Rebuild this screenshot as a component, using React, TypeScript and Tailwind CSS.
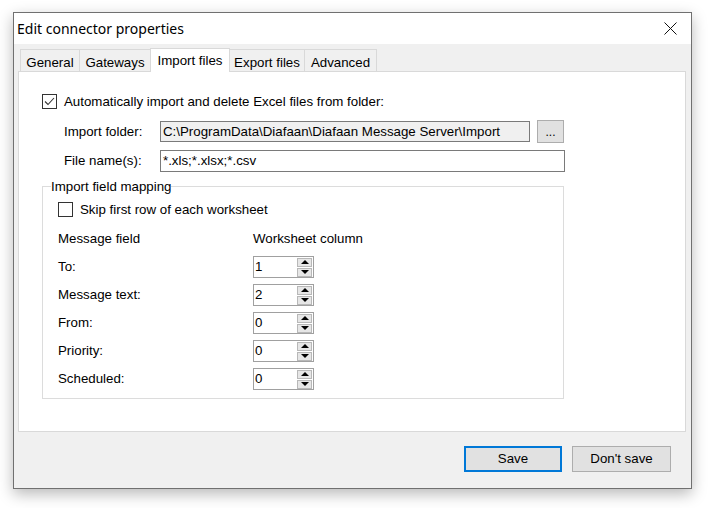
import React from "react";

const font = { fontFamily: '"Liberation Sans", Arial, sans-serif' };

function CheckBox({ checked }: { checked?: boolean }) {
  return (
    <div className="w-[15px] h-[15px] border border-[#333333] bg-white flex items-center justify-center shrink-0">
      {checked && (
        <svg width="13" height="13" viewBox="0 0 13 13">
          <polyline points="2,6.5 5,9.5 11,3" fill="none" stroke="#333333" strokeWidth="1.1" />
        </svg>
      )}
    </div>
  );
}

function Tab({ label, w, selected, first }: { label: string; w: string; selected?: boolean; first?: boolean }) {
  if (selected) {
    return (
      <div className={`${w} h-[24px] -ml-px bg-white border border-b-0 border-[#d9d9d9] flex items-start justify-center pt-[2px] text-[13.3px] text-black`}>
        {label}
      </div>
    );
  }
  return (
    <div className={`${w} h-[23px] ${first ? "" : "-ml-px"} bg-[#f0f0f0] border border-[#d9d9d9] flex items-start justify-center pt-[3px] text-[13.3px] text-black`}>
      {label}
    </div>
  );
}

function Spin({ value }: { value: string }) {
  return (
    <div className="w-[61px] h-[22px] border border-[#a0a0a0] bg-white flex items-center justify-between">
      <span className="pl-[1px] text-[13.3px] text-black">{value}</span>
      <div className="flex flex-col gap-[1px] mr-[1px]">
        <div className="w-[15px] h-[9px] bg-[#e6e6e6] border border-[#b8b8b8] flex items-center justify-center">
          <svg width="8" height="4" viewBox="0 0 8 4"><polygon points="0,4 8,4 4,0" fill="#000" /></svg>
        </div>
        <div className="w-[15px] h-[9px] bg-[#e6e6e6] border border-[#b8b8b8] flex items-center justify-center">
          <svg width="8" height="4" viewBox="0 0 8 4"><polygon points="0,0 8,0 4,4" fill="#000" /></svg>
        </div>
      </div>
    </div>
  );
}

const rows: [string, string][] = [
  ["To:", "1"],
  ["Message text:", "2"],
  ["From:", "0"],
  ["Priority:", "0"],
  ["Scheduled:", "0"],
];

export default function App() {
  return (
    <div className="w-[709px] h-[508px] bg-white pt-[12px] pl-[13px]" style={font}>
      <div className="w-[679px] h-[477px] border border-[#707070] bg-[#f0f0f0] shadow-[0_5px_14px_rgba(0,0,0,0.28)] flex flex-col">
        <div className="h-[31px] bg-white flex items-center justify-between pl-[3px] pr-[14px] shrink-0">
          <span className="text-[14px] text-black" style={{ fontFamily: '"Noto Sans", "Open Sans", sans-serif' }}>
            Edit connector properties
          </span>
          <svg width="13" height="13" viewBox="0 0 13 13">
            <line x1="0.5" y1="0.5" x2="12.5" y2="12.5" stroke="#111" strokeWidth="1" />
            <line x1="12.5" y1="0.5" x2="0.5" y2="12.5" stroke="#111" strokeWidth="1" />
          </svg>
        </div>
        <div className="flex flex-col pt-[4px]">
          <div className="relative z-10 flex items-end h-[24px] pl-[6px] -mb-px">
            <Tab label="General" w="w-[60px]" first />
            <Tab label="Gateways" w="w-[72px]" />
            <Tab label="Import files" w="w-[80px]" selected />
            <Tab label="Export files" w="w-[76px]" />
            <Tab label="Advanced" w="w-[73px]" />
          </div>
          <div className="ml-[4px] w-[668px] h-[361px] bg-white border border-[#d9d9d9] pt-[22px] pl-[23px] text-[13.3px] text-black">
            <div className="flex items-center h-[15px]">
              <CheckBox checked />
              <span className="ml-[7px]">Automatically import and delete Excel files from folder:</span>
            </div>
            <div className="flex items-center h-[23px] mt-[11px]">
              <span className="ml-[22px] w-[96px]">Import folder:</span>
              <div className="w-[370px] h-[21px] border border-[#7a7a7a] bg-[#f0f0f0] flex items-center pl-[2px]">
                C:\ProgramData\Diafaan\Diafaan Message Server\Import
              </div>
              <div className="ml-[7px] w-[27px] h-[23px] border border-[#adadad] bg-[#e1e1e1] flex items-center justify-center text-[12px]">
                ...
              </div>
            </div>
            <div className="flex items-center h-[22px] mt-[7px]">
              <span className="ml-[22px] w-[96px]">File name(s):</span>
              <div className="w-[405px] h-[22px] border border-[#7a7a7a] bg-white flex items-center pl-[2px]">
                *.xls;*.xlsx;*.csv
              </div>
            </div>
            <fieldset className="mt-[7px] w-[522px] h-[220px] border border-[#dcdcdc] pl-[8px]">
              <legend className="leading-[15px]">Import field mapping</legend>
              <div className="pl-[7px] pt-[8px]">
                <div className="flex items-center h-[15px]">
                  <CheckBox />
                  <span className="ml-[7px]">Skip first row of each worksheet</span>
                </div>
                <div className="flex items-center h-[15px] mt-[14px]">
                  <span className="w-[195px]">Message field</span>
                  <span>Worksheet column</span>
                </div>
                <div className="flex flex-col gap-[6px] mt-[10px]">
                  {rows.map(([l, v]) => (
                    <div key={l} className="flex items-center h-[22px]">
                      <span className="w-[195px]">{l}</span>
                      <Spin value={v} />
                    </div>
                  ))}
                </div>
              </div>
            </fieldset>
          </div>
          <div className="flex justify-end gap-[10px] pr-[20px] mt-[14px] text-[13.3px] text-black">
            <div className="w-[98px] h-[26px] border-2 border-[#0078d7] bg-[#e1e1e1] flex items-center justify-center">Save</div>
            <div className="w-[99px] h-[26px] border border-[#adadad] bg-[#e1e1e1] flex items-center justify-center">Don't save</div>
          </div>
        </div>
      </div>
    </div>
  );
}
